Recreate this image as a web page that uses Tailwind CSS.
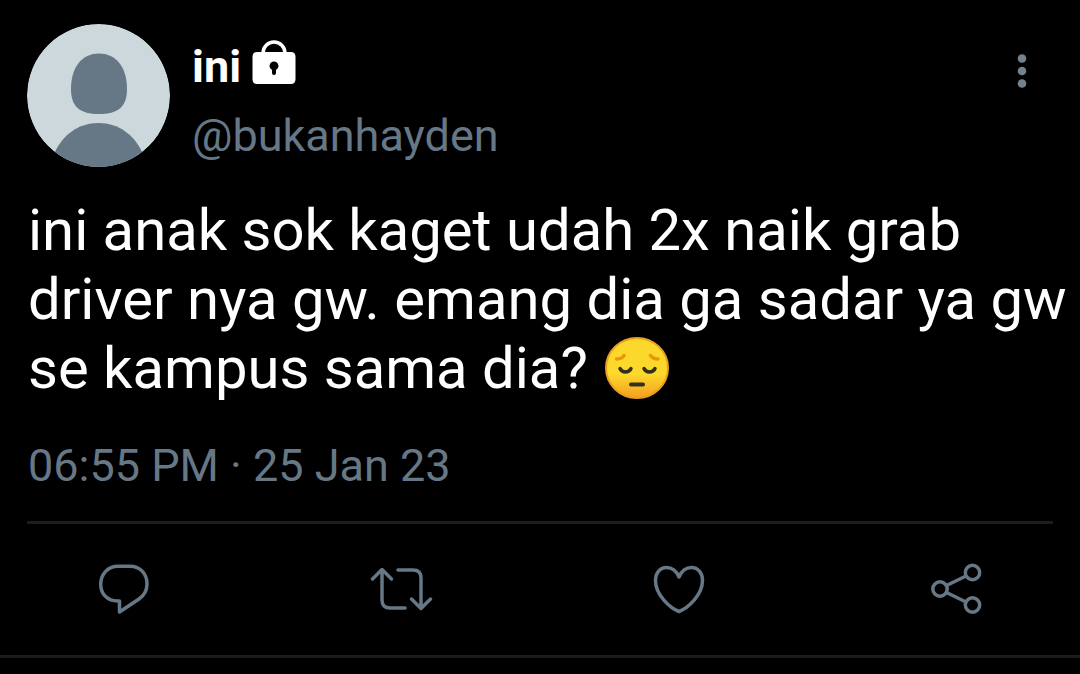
<!DOCTYPE html>
<html lang="id">
<head>
<meta charset="utf-8">
<meta name="viewport" content="width=device-width, initial-scale=1">
<title>ini (@bukanhayden)</title>
<script src="https://cdn.jsdelivr.net/npm/@tailwindcss/browser@4"></script>
</head>
<body class="min-h-screen bg-black font-['Roboto',sans-serif] text-[#667786]">
<article class="border-b-3 border-[#1c1c1c] pt-6">
  <header class="flex items-start pr-10 pl-[27px]">
    <svg class="h-[143px] w-[143px] shrink-0 rounded-full" viewBox="0 0 143 143" role="img" aria-label="Avatar">
      <circle cx="71.500" cy="71.500" r="71.500" fill="#cdd8dd"/>
      <path d="M72 29.500C89 29.500 100 43 100 65C100 83 91 90 72 90C53 90 44 83 44 65C44 43 55 29.500 72 29.500Z" fill="#667786"/>
      <path d="M28 128C36 111 51 99 71.500 99C92 99 107 111 115 128C104 137 88 143 71.500 143C55 143 39 137 28 128Z" fill="#667786"/>
    </svg>
    <div class="ml-[22px] flex-1 pt-[17px]">
      <h1 class="flex items-center gap-[11px] text-[45px] leading-[52px] font-bold text-white">ini
        <svg class="-mt-[10px] h-11 w-11" viewBox="0 0 44 44" role="img" aria-label="Akun terkunci">
          <path d="M11 14V13a11 11 0 0 1 22 0v1" fill="none" stroke="#fff" stroke-width="3.500"/>
          <path fill-rule="evenodd" fill="#fff" d="M5 12H39Q43.500 12 43.500 17V39Q43.500 44 39 44H5Q.5 44 .5 39V17Q.5 12 5 12ZM22 21.500a4.500 4.500 0 0 0-2 8.500V33a2 2 0 0 0 4 0V30a4.500 4.500 0 0 0-2-8.500Z"/>
        </svg>
      </h1>
      <a href="#" class="mt-[17px] block w-fit text-[45px] leading-[52px]">@bukanhayden</a>
    </div>
    <button type="button" class="mt-[23px] flex h-12 w-9 items-center justify-center" aria-label="Menu">
      <svg class="h-9 w-3" viewBox="0 0 12 36" fill="#72828f"><circle cx="6" cy="5.500" r="4.300"/><circle cx="6" cy="18" r="4.300"/><circle cx="6" cy="30.500" r="4.300"/></svg>
    </button>
  </header>
  <p class="mt-[29px] pr-3 pl-7 text-[58px] leading-[69px] text-white">ini anak sok kaget udah 2x naik grab driver nya gw. emang dia ga sadar ya gw se kampus sama dia?
    <svg class="ml-[3px] inline-block h-16 w-16 align-[-12px]" viewBox="0 0 64 64" role="img" aria-label="Wajah murung">
      <defs>
        <linearGradient id="face" x2="0" y2="1"><stop offset="0" stop-color="#fbd72b"/><stop offset=".6" stop-color="#fdd92c"/><stop offset="1" stop-color="#f59e20"/></linearGradient>
      </defs>
      <ellipse cx="32" cy="32" rx="31" ry="30" fill="url(#face)" stroke="#e9a020" stroke-width="2"/>
      <g fill="none" stroke-linecap="round">
        <path d="M11.500 23Q17 23 19 19.500M45.500 19.500Q48 23 53 23" stroke="#e8960c" stroke-width="3.500"/>
        <path d="M15 32.500C17 37 24 37 26 32.500M39 32.500C41 37 48 37 50 32.500" stroke="#33301b" stroke-width="3.500"/>
        <path d="M26 48.500H38" stroke="#33301b" stroke-width="4"/>
      </g>
    </svg>
  </p>
  <time class="mt-[37px] block px-7 text-[45px] leading-[52px]" datetime="2023-01-25T18:55">06:55 PM · 25 Jan 23</time>
  <hr class="mx-[27px] mt-[29px] border-t-3 border-[#1c1c1c]">
  <div class="flex justify-between px-[87px] pt-7 pb-[31px]">
    <button type="button" class="h-[72px] w-[72px]" aria-label="Balas">
      <svg viewBox="0 0 72 72" fill="none" stroke="#667786" stroke-width="3.500" stroke-linejoin="round"><path d="M32.500 49H30.500C20.500 49 13.700 42 13.700 32.500C13.700 22.500 20.500 14.200 31 14.200H43C53.500 14.200 60 22 60 32C60 39 57 43.500 52 47L32.500 60V49Z"/></svg>
    </button>
    <button type="button" class="h-[72px] w-[72px]" aria-label="Retweet">
      <svg viewBox="0 0 72 72" fill="none" stroke="#667786" stroke-width="3.500" stroke-linecap="round" stroke-linejoin="round"><path d="M7.500 27L17 17.500L26.500 27M17 18V48Q17 56 25 56H40M33 18H48Q56 18 56 26V56M46.500 47L56 56.500L65.500 47"/></svg>
    </button>
    <button type="button" class="h-[72px] w-[72px]" aria-label="Suka">
      <svg viewBox="0 0 72 72" fill="none" stroke="#667786" stroke-width="3.500" stroke-linejoin="round"><path d="M36 25C33 18 28 15.500 23.500 15.500C17 15.500 12.500 21 12.500 28.500C12.500 43 27 56 36 59.500C45 56 59.500 43 59.500 28.500C59.500 21 55 15.500 48.500 15.500C44 15.500 39 18 36 25Z"/></svg>
    </button>
    <button type="button" class="h-[72px] w-[72px]" aria-label="Bagikan">
      <svg viewBox="0 0 72 72" fill="none" stroke="#667786" stroke-width="3.500"><circle cx="19" cy="37" r="7.200"/><circle cx="51.500" cy="20.500" r="7.200"/><circle cx="51.500" cy="53" r="7.200"/><path d="M25.500 33.500L45 24M25.500 40.500L45 50"/></svg>
    </button>
  </div>
</article>
</body>
</html>
